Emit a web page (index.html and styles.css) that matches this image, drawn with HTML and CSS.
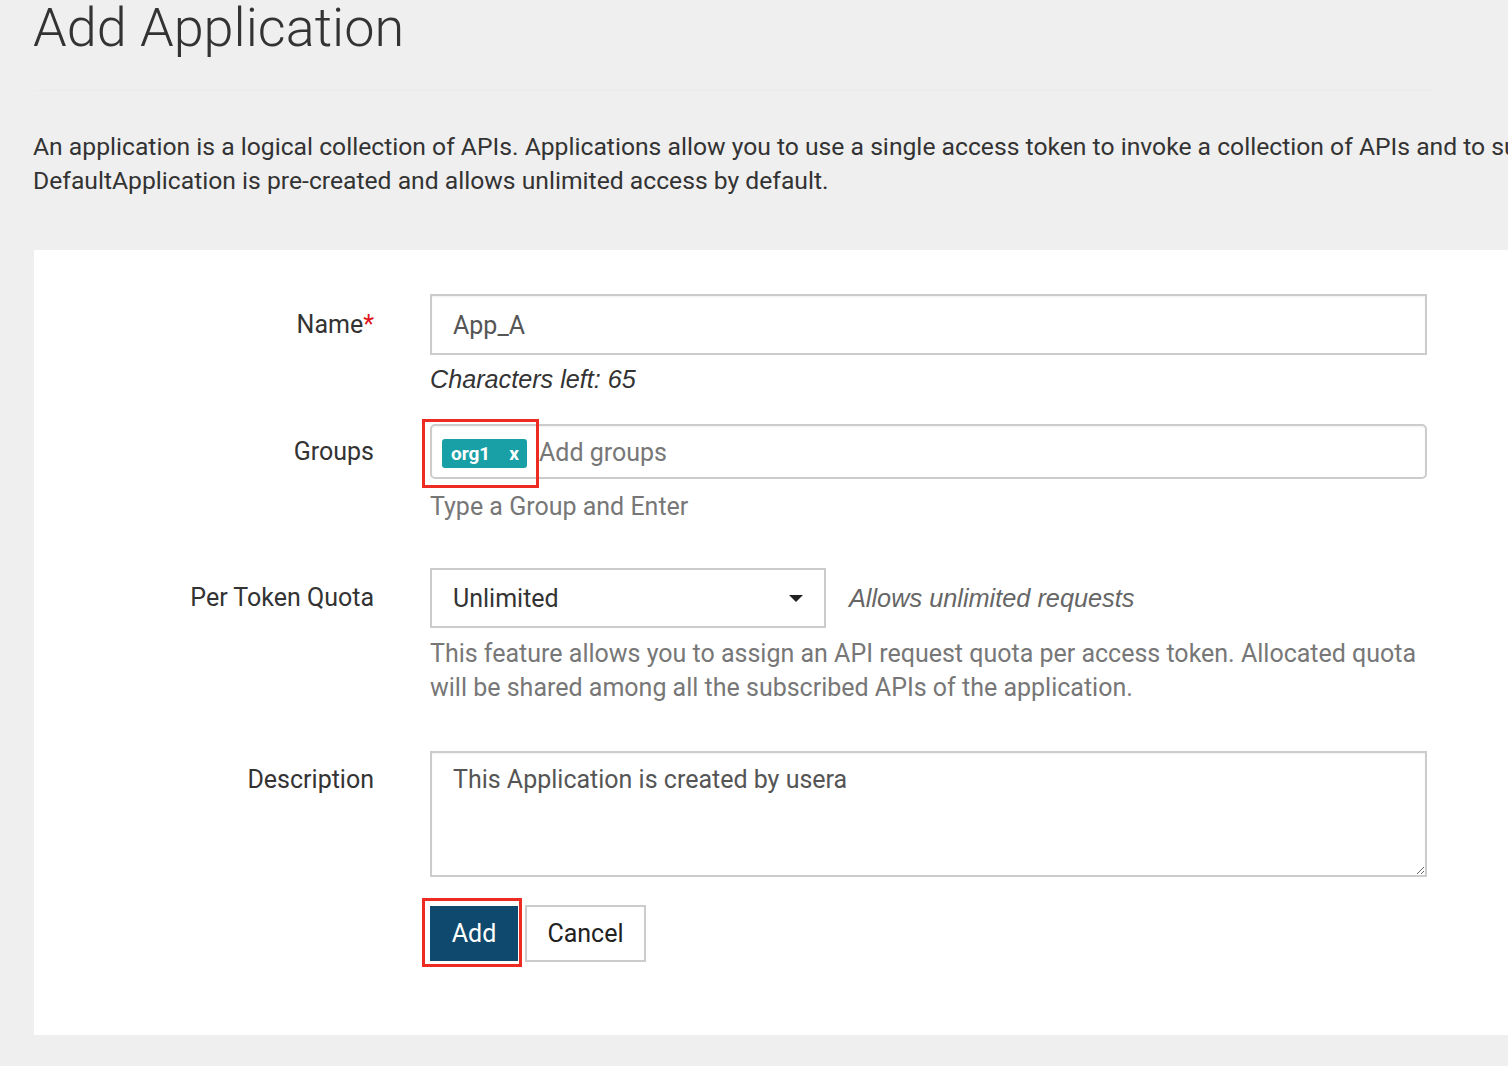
FILE: index.html
```html
<!DOCTYPE html>
<html>
<head>
<meta charset="utf-8">
<link rel="stylesheet" href="styles.css">
</head>
<body>
<div class="page">
  <h1 class="title">Add Application</h1>
  <hr class="divider">
  <p class="intro">An application is a logical collection of APIs. Applications allow you to use a single access token to invoke a collection of APIs and to subscribe to one API multiple times with different SLA levels. The<br>DefaultApplication is pre-created and allows unlimited access by default.</p>
  <div class="panel">
    <div class="row row-name">
      <div class="label">Name<span class="req">*</span></div>
      <div class="control">
        <div class="field field-name">App_A</div>
        <div class="chars">Characters left: 65</div>
      </div>
    </div>
    <div class="row row-groups">
      <div class="label">Groups</div>
      <div class="control">
        <div class="field field-groups">
          <span class="tag"><span class="tag-name">org1</span><span class="tag-x">x</span></span>
          <span class="placeholder">Add groups</span>
          <span class="mark mark-groups"></span>
        </div>
        <div class="help">Type a Group and Enter</div>
      </div>
    </div>
    <div class="row row-quota">
      <div class="label">Per Token Quota</div>
      <div class="control">
        <div class="select-line">
          <div class="select">Unlimited<span class="caret"></span></div>
          <div class="quota-note">Allows unlimited requests</div>
        </div>
        <div class="help help-quota">This feature allows you to assign an API request quota per access token. Allocated quota will be shared among all the subscribed APIs of the application.</div>
      </div>
    </div>
    <div class="row row-desc">
      <div class="label">Description</div>
      <div class="control">
        <textarea class="textarea">This Application is created by usera</textarea>
      </div>
    </div>
    <div class="row row-buttons">
      <div class="label"></div>
      <div class="control buttons">
        <span class="btn-wrap"><button class="btn btn-primary">Add</button><span class="mark mark-add"></span></span>
        <button class="btn btn-default">Cancel</button>
      </div>
    </div>
  </div>
</div>
</body>
</html>
```

FILE: styles.css
```css
html, body {
  margin: 0;
  padding: 0;
  overflow: hidden;
  background: #efefef;
}
body {
  font-family: Roboto, "Liberation Sans", sans-serif;
  color: #333;
  width: 1508px;
  height: 1066px;
}
.page {
  width: 1700px;
  padding-left: 34px;
}
.title {
  margin: 0;
  font-weight: 300;
  font-size: 54px;
  line-height: 56px;
  color: #333;
  padding-top: 0;
  margin-left: -1px;
}
.divider {
  border: 0;
  border-top: 1px solid #ebebeb;
  margin: 34px 0 0 0;
  width: 1400px;
}
.intro {
  margin: 39px 0 0 -1px;
  font-size: 24.7px;
  line-height: 34px;
  white-space: nowrap;
  color: #333;
}
.panel {
  margin-top: 52px;
  background: #fff;
  width: 1600px;
  padding: 44px 0 67px 0;
}
.row {
  display: flex;
  align-items: flex-start;
}
.label {
  width: 340px;
  flex: none;
  text-align: right;
  font-size: 25px;
  line-height: 34px;
  padding-top: 14px;
  color: #333;
}
.req { color: #e0151b; }
.control {
  margin-left: 56px;
  width: 997px;
  flex: none;
}
.row-groups { margin-top: 28px; }
.row-groups .label { padding-top: 11px; }
.row-quota { margin-top: 44px; }
.row-quota .label { padding-top: 13px; }
.row-desc { margin-top: 46px; }
.row-desc .label { padding-top: 12px; }
.row-buttons { margin-top: 22px; }
.row-buttons .label { padding-top: 0; }

.field {
  box-sizing: border-box;
  border: 2px solid #ccc;
  background: #fff;
  box-shadow: inset 0 1px 2px rgba(0,0,0,0.06);
  font-size: 25px;
  color: #555;
}
.field-name {
  height: 61px;
  line-height: 59px;
  padding-left: 21px;
}
.chars {
  margin-top: 7px;
  font-family: "Liberation Sans", Arial, sans-serif;
  font-style: italic;
  font-size: 25.2px;
  line-height: 34px;
  color: #333;
}
.field-groups {
  position: relative;
  height: 55px;
  border-radius: 5px;
  display: flex;
  align-items: center;
  padding-left: 10px;
}
.tag {
  display: inline-flex;
  align-items: center;
  height: 29px;
  width: 85px;
  box-sizing: border-box;
  background: #19a0a6;
  border-radius: 3px;
  color: #fff;
  font-weight: 700;
  font-size: 19px;
  padding-left: 9px;
  margin-top: 4px;
}
.tag-x { margin-left: 19px; }
.placeholder {
  margin-left: 12px;
  color: #777;
  font-size: 25px;
  margin-top: 2px;
}
.mark {
  position: absolute;
  border: 3px solid #ee2b22;
  box-sizing: border-box;
  pointer-events: none;
}
.mark-groups {
  left: -10px;
  top: -7px;
  width: 117px;
  height: 69px;
}
.help {
  margin-top: 11px;
  font-size: 25px;
  line-height: 34px;
  color: #777;
}
.help-quota { margin-top: 9px; width: 990px; }
.select-line {
  display: flex;
  align-items: center;
}
.select {
  box-sizing: border-box;
  width: 396px;
  height: 60px;
  border: 2px solid #ccc;
  background: #fff;
  font-size: 25px;
  line-height: 57px;
  padding-left: 21px;
  color: #333;
  position: relative;
}
.caret {
  position: absolute;
  left: 357px;
  top: 25px;
  width: 0;
  height: 0;
  border-left: 7px solid transparent;
  border-right: 7px solid transparent;
  border-top: 7px solid #222;
}
.quota-note {
  margin-left: 23px;
  font-family: "Liberation Sans", Arial, sans-serif;
  font-style: italic;
  font-size: 25.3px;
  color: #666;
}
.textarea {
  display: block;
  box-sizing: border-box;
  width: 997px;
  height: 126px;
  border: 2px solid #ccc;
  border-radius: 0;
  box-shadow: inset 0 1px 2px rgba(0,0,0,0.06);
  font-family: Roboto, "Liberation Sans", sans-serif;
  font-size: 25px;
  line-height: 34px;
  color: #555;
  padding: 10px 21px;
  margin: 0;
  outline: none;
  resize: vertical;
}
.buttons {
  display: flex;
  align-items: center;
  height: 69px;
}
.btn-wrap {
  position: relative;
  display: inline-block;
}
.btn {
  font-family: Roboto, "Liberation Sans", sans-serif;
  font-size: 25px;
  box-sizing: border-box;
  margin: 0;
  cursor: pointer;
  display: block;
}
.btn-primary {
  width: 88px;
  height: 55px;
  background: #0f4a6e;
  color: #fff;
  border: 0;
}
.btn-default {
  margin-left: 7px;
  width: 121px;
  height: 57px;
  background: #fff;
  color: #222;
  border: 2px solid #ccc;
}
.mark-add {
  left: -8px;
  top: -8px;
  width: 100px;
  height: 69px;
}
```
